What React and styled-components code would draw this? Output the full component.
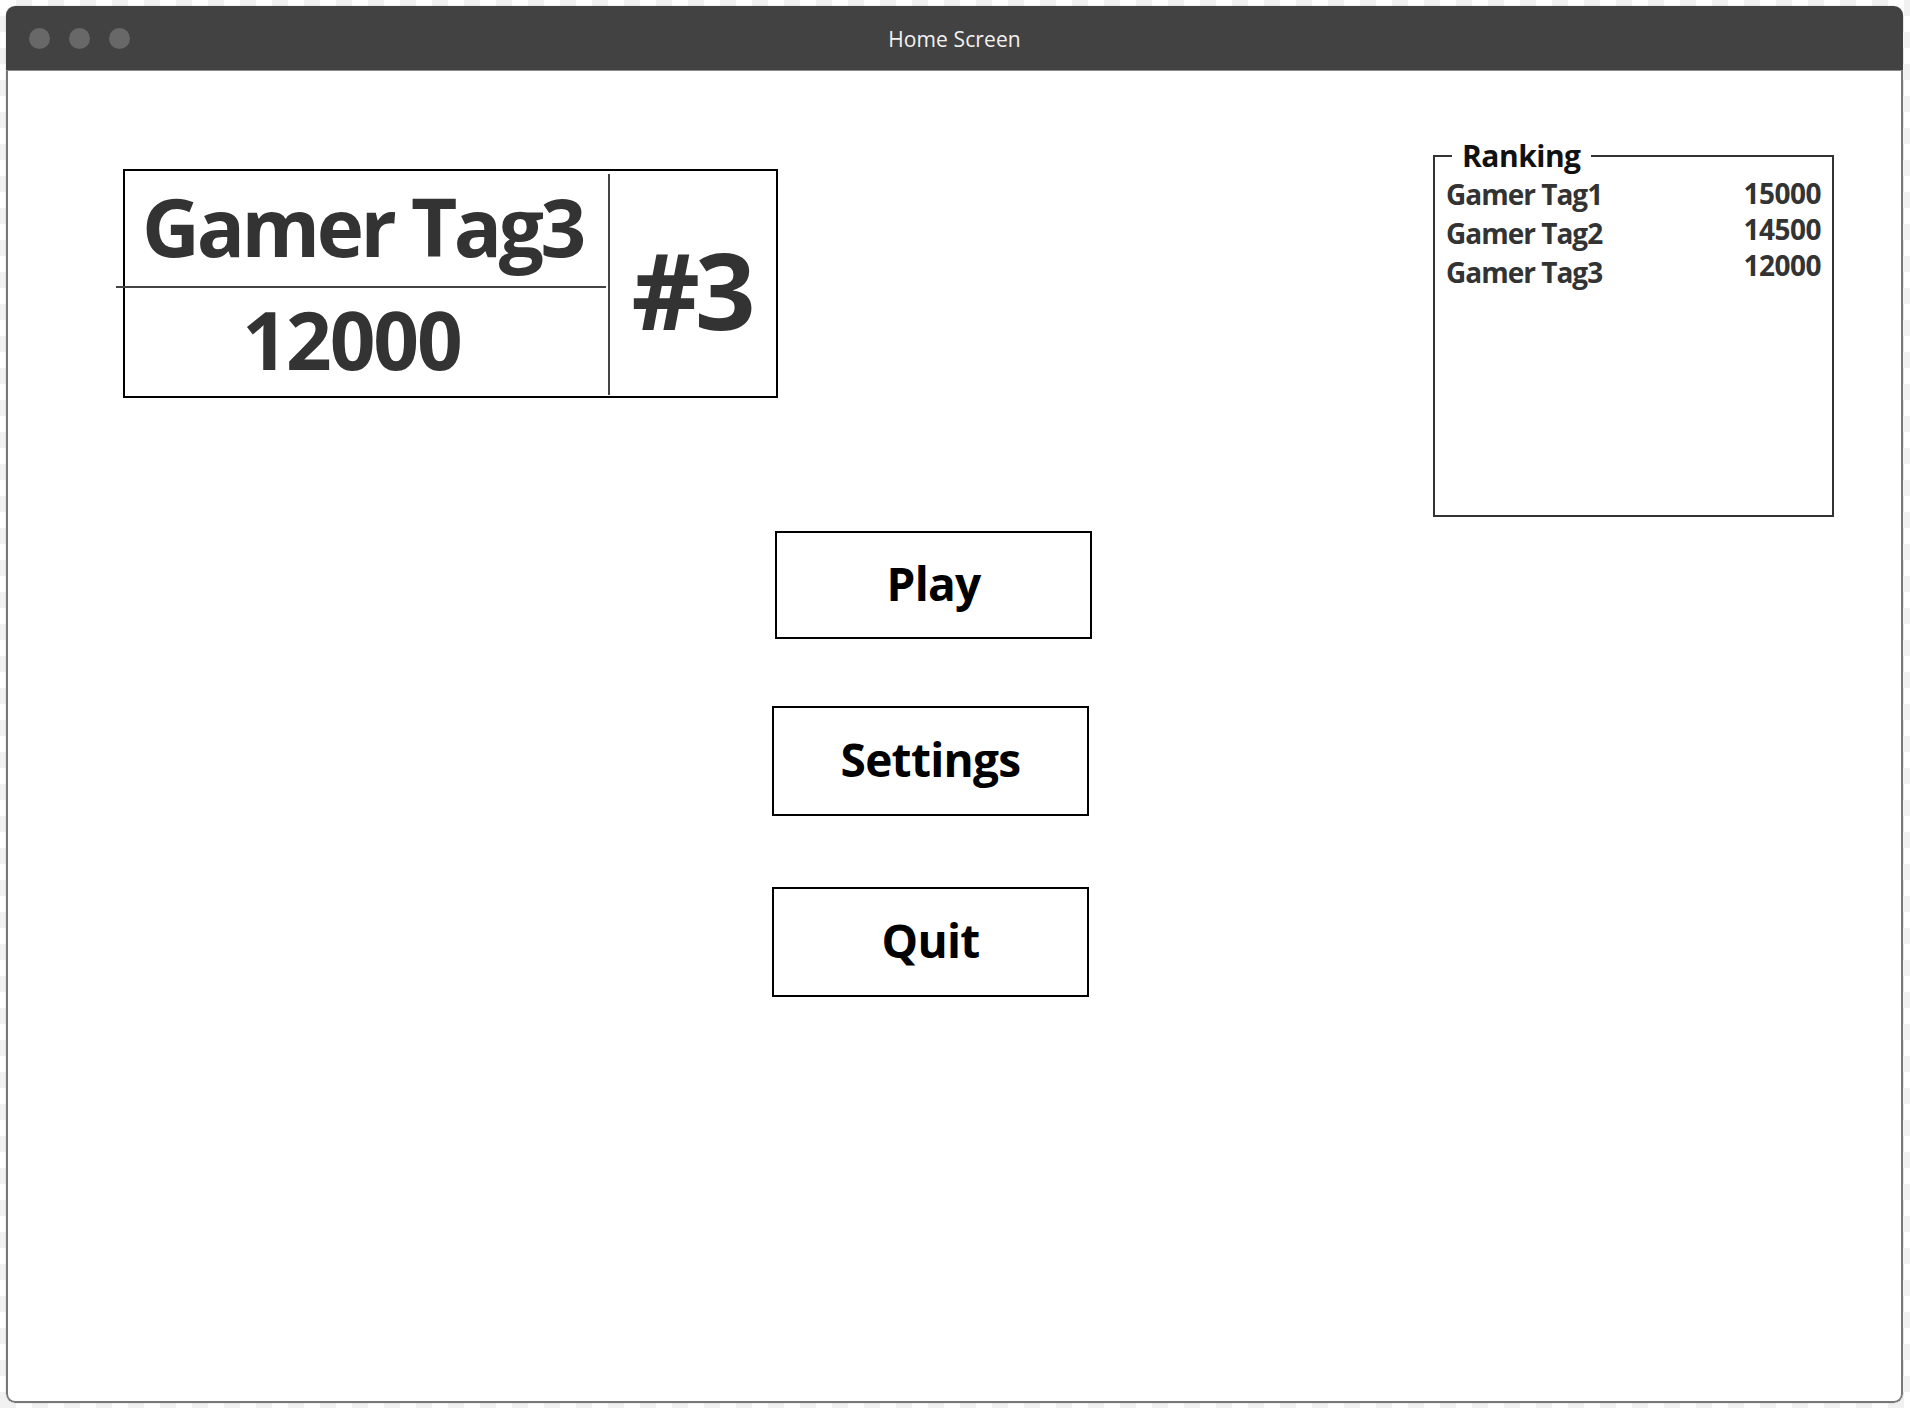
import React from 'react';
import styled, { createGlobalStyle } from 'styled-components';

const ranking = [
  { tag: 'Gamer Tag1', score: 15000 },
  { tag: 'Gamer Tag2', score: 14500 },
  { tag: 'Gamer Tag3', score: 12000 },
];

// shift / space: small hand offsets so the buttons sit where the mockup has them
const menu = [
  { label: 'Play', shift: 3, space: 14, height: 108 },
  { label: 'Settings', shift: 0, space: 67, height: 110 },
  { label: 'Quit', shift: 0, space: 71, height: 110 },
];

function App() {
  return (
    <>
      <GlobalStyle />
      <Page>
        <Window>
          <TitleBar>
            <Dots>
              <Dot />
              <Dot />
              <Dot />
            </Dots>
            <Title>Home Screen</Title>
          </TitleBar>
          <Content>
            <TopRow>
              <PlayerCard>
                <PlayerInfo>
                  <PlayerName>Gamer Tag3</PlayerName>
                  <HLine />
                  <PlayerScore>12000</PlayerScore>
                </PlayerInfo>
                <VLine />
                <Rank>#3</Rank>
              </PlayerCard>

              <RankingBox>
                <Legend>Ranking</Legend>
                <RankingList>
                  <NameColumn>
                    {ranking.map((r) => (
                      <span key={r.tag}>{r.tag}</span>
                    ))}
                  </NameColumn>
                  <ScoreColumn>
                    {ranking.map((r) => (
                      <span key={r.tag}>{r.score}</span>
                    ))}
                  </ScoreColumn>
                </RankingList>
              </RankingBox>
            </TopRow>

            <Menu>
              {menu.map((m) => (
                <MenuButton
                  key={m.label}
                  $shift={m.shift}
                  $space={m.space}
                  $height={m.height}
                >
                  {m.label}
                </MenuButton>
              ))}
            </Menu>
          </Content>
        </Window>
      </Page>
    </>
  );
}

const GlobalStyle = createGlobalStyle`
  html, body {
    margin: 0;
    padding: 0;
  }
  body {
    font-family: "Open Sans", "Noto Sans", sans-serif;
    background-color: #ffffff;
    background-image: conic-gradient(
      #f1f1f1 25%,
      transparent 0 50%,
      #f1f1f1 0 75%,
      transparent 0
    );
    background-size: 32px 32px;
  }
  * {
    box-sizing: border-box;
  }
`;

const Page = styled.div`
  width: 100%;
  height: 100vh;
  padding: 6px 7px 5px 6px;
`;

const Window = styled.div`
  display: flex;
  flex-direction: column;
  height: 100%;
  background: #fff;
  border-radius: 9px;
  overflow: hidden;
  box-shadow: 0 0 0 0.5px rgba(0, 0, 0, 0.1);
`;

const TitleBar = styled.div`
  display: grid;
  grid-template-columns: 1fr auto 1fr;
  align-items: center;
  height: 65px;
  flex-shrink: 0;
  background: #424242;
  border-bottom: 1px solid #8a8a8a;
  padding: 0 23px;
`;

const Dots = styled.div`
  display: flex;
  gap: 19px;
`;

const Dot = styled.span`
  width: 21px;
  height: 21px;
  border-radius: 50%;
  background: #686868;
`;

const Title = styled.div`
  color: #f2f2f2;
  font-size: 21px;
  letter-spacing: 0.1px;
  padding-top: 1px;
`;

const Content = styled.div`
  flex: 1;
  display: flex;
  flex-direction: column;
  border: 2px solid #777;
  border-top: none;
  border-radius: 0 0 9px 9px;
  padding: 68px 67px 0 115px;
`;

const TopRow = styled.div`
  display: flex;
  justify-content: space-between;
  align-items: flex-start;
`;

const PlayerCard = styled.div`
  display: grid;
  grid-template-columns: 483px 2px 1fr;
  width: 655px;
  height: 229px;
  margin-top: 30px;
  border: 2px solid #000;
  color: #333;
  font-weight: 700;
`;

const PlayerInfo = styled.div`
  display: grid;
  grid-template-rows: 115px 2px 1fr;
`;

const PlayerName = styled.div`
  display: flex;
  align-items: center;
  justify-content: center;
  padding: 0 8px 6px 0;
  font-size: 80px;
  line-height: 1;
  letter-spacing: -3.4px;
`;

const PlayerScore = styled(PlayerName)`
  padding: 0 30px 6px 0;
  letter-spacing: -2px;
`;

const HLine = styled.div`
  margin: 0 2px 0 -9px;
  background: #444;
`;

const VLine = styled.div`
  margin: 3px 0 1px;
  background: #444;
`;

const Rank = styled.div`
  display: flex;
  align-items: center;
  justify-content: center;
  padding: 10px 4px 0 0;
  font-size: 106px;
  line-height: 1;
  letter-spacing: -5px;
`;

const RankingBox = styled.fieldset`
  width: 401px;
  height: 378px;
  margin: 0;
  padding: 0 11px;
  border: 2px solid #333;
`;

const Legend = styled.legend`
  margin-left: 6px;
  padding: 0 10px;
  font-size: 30px;
  line-height: 34px;
  font-weight: 700;
  color: #111;
  letter-spacing: -0.5px;
`;

const RankingList = styled.div`
  display: flex;
  justify-content: space-between;
  margin-top: 2px;
  color: #333;
  font-weight: 700;
  font-size: 28px;
`;

const NameColumn = styled.div`
  display: flex;
  flex-direction: column;
  line-height: 39px;
  letter-spacing: -1px;
`;

const ScoreColumn = styled.div`
  display: flex;
  flex-direction: column;
  line-height: 36px;
  letter-spacing: -0.5px;
`;

const Menu = styled.div`
  display: flex;
  flex-direction: column;
  align-items: flex-start;
  padding-left: 649px;
`;

const MenuButton = styled.button`
  width: 317px;
  height: ${({ $height }) => $height}px;
  margin: ${({ $space }) => $space}px 0 0 ${({ $shift }) => $shift}px;
  border: 2px solid #000;
  background: #fff;
  color: #000;
  font-family: inherit;
  font-size: 46px;
  font-weight: 700;
  letter-spacing: -0.7px;
  padding: 0 0 4px;
  cursor: pointer;
`;

export default App;
